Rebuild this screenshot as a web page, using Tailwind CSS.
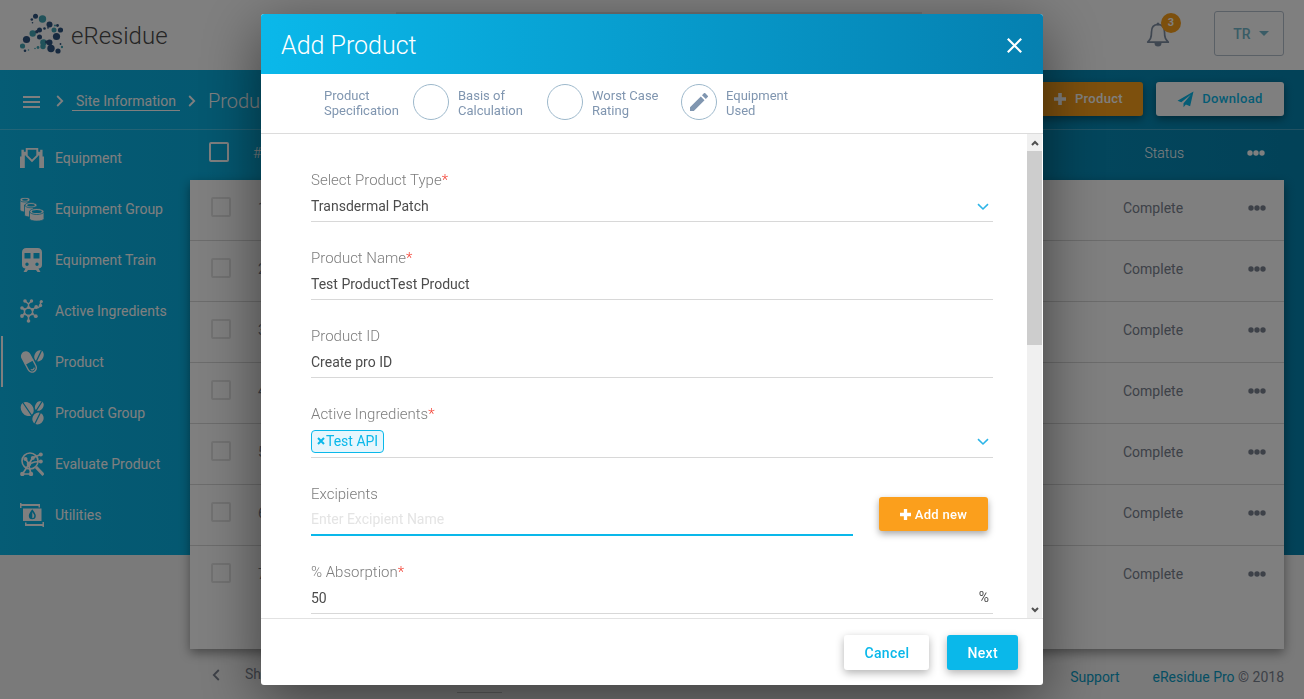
<!DOCTYPE html>
<html lang="en">
<head>
<meta charset="utf-8">
<meta name="viewport" content="width=device-width, initial-scale=1">
<title>eResidue - Add Product</title>
<script src="https://cdn.jsdelivr.net/npm/@tailwindcss/browser@4"></script>
</head>
<body class="h-screen overflow-hidden bg-[#f4f4f4] font-[Roboto,sans-serif] text-sm text-[#7b8390]">

<svg class="hidden" aria-hidden="true">
  <symbol id="dots" viewBox="0 0 18 6"><circle cx="3" cy="3" r="2.7"/><circle cx="9" cy="3" r="2.7"/><circle cx="15" cy="3" r="2.7"/></symbol>
  <symbol id="chev" viewBox="0 0 8 12"><path d="M1.2 1l5 5-5 5" fill="none" stroke="currentColor" stroke-width="1.8"/></symbol>
  <symbol id="down" viewBox="0 0 12 8"><path d="M1 1.2l5 4.8 5-4.800" fill="none" stroke="currentColor" stroke-width="1.6"/></symbol>
  <symbol id="plus" viewBox="0 0 12 12"><path d="M4.200 0h3.600v4.200H12v3.600H7.800V12H4.200V7.800H0V4.200h4.200z"/></symbol>
</svg>

<div class="flex min-h-screen flex-col">
  <header class="flex h-[70px] items-center bg-white px-5 pb-[3px]">
    <a href="#" class="flex items-center gap-2 text-[#4a4a4a]">
      <svg class="h-[42px] w-[43px]" viewBox="0 0 43 42" aria-hidden="true">
        <g fill="#42a5b5"><circle cx="22.500" cy="6" r="3.700"/><circle cx="12.700" cy="20.500" r="3.200"/><circle cx="34" cy="17" r="2.500"/><circle cx="2.500" cy="33" r="2.600"/><circle cx="23.500" cy="29.500" r="3.300"/><circle cx="23" cy="33.500" r="2.700"/><circle cx="42" cy="34" r="1.200"/><circle cx="18" cy="34.500" r="1.400"/><circle cx="15" cy="35.500" r=".8"/><circle cx="8.500" cy="37" r=".8"/><circle cx="35" cy="12.500" r="1"/></g>
        <g fill="#2f5580"><circle cx="15.500" cy="3.300" r="2.500"/><circle cx="11.800" cy="6.500" r="1.300"/><circle cx="12.500" cy="9.800" r=".8"/><circle cx="29.500" cy="11.500" r="3"/><circle cx="37.500" cy="12.500" r="1.400"/><circle cx="40.500" cy="17" r="2.600"/><circle cx="36.500" cy="23.500" r="3.600"/><circle cx="19.500" cy="17" r="2.500"/><circle cx="16.800" cy="18.800" r="1.700"/><circle cx="24.500" cy="15.500" r="1.300"/><circle cx="28" cy="14.800" r=".9"/><circle cx="19.500" cy="24" r="2.500"/><circle cx="6.500" cy="26.500" r="3.600"/><circle cx="29.500" cy="29.500" r="3"/><circle cx="31" cy="35.500" r="3.700"/><circle cx="26.500" cy="29" r="1.500"/><circle cx="38" cy="38" r="2.600"/><circle cx="5" cy="37.800" r="1.300"/><circle cx="40.500" cy="31" r=".9"/></g>
      </svg>
      <span class="pt-[5px] text-2xl font-light leading-8">eResidue</span>
    </a>
    <div class="ml-auto flex items-center gap-[33px]">
      <button type="button" aria-label="Notifications, 3 new" class="relative h-[45px] w-[35px]">
        <svg class="mt-[2px] h-[26px] w-6" viewBox="0 0 24 26" aria-hidden="true"><path d="M12 2.500c-4.500 0-6.500 3.200-6.500 7.500 0 6-1.300 7.500-3.800 10.200h20.600c-2.500-2.700-3.800-4.200-3.800-10.200 0-4.300-2-7.500-6.500-7.500z" fill="none" stroke="#7f8ea3" stroke-width="1.700" stroke-linejoin="round"/><path d="M8.500 21h7a3.500 3.500 0 0 1-7 0z" fill="#7f8ea3"/><circle cx="12" cy="2" r="1.500" fill="#7f8ea3"/></svg>
        <span class="absolute right-0 top-[2px] size-5 rounded-full bg-[#faa01b] text-center text-[11px] font-bold leading-5 text-white">3</span>
      </button>
      <button type="button" class="flex h-[45px] w-[70px] items-center justify-center gap-2 rounded-[3px] border border-[#b4c0cc] pl-1 font-medium text-[#74b9cc]">TR
        <svg class="h-[5px] w-[10px]" viewBox="0 0 10 5" fill="currentColor" aria-hidden="true"><path d="M0 0h10L5 5z"/></svg>
      </button>
    </div>
  </header>

  <main class="bg-[linear-gradient(90deg,#0ab8ea,#0584b0)] bg-[length:100%_485px] bg-no-repeat">
    <div class="flex h-[60px] items-center border-b border-white/25 px-5 pb-[1px] text-white">
      <button type="button" aria-label="Menu" class="ml-[3px] mr-4 flex w-[17px] flex-col gap-[3px] pt-[5px]">
        <span class="h-[2px] w-full bg-white"></span><span class="h-[2px] w-full bg-white"></span><span class="h-[2px] w-full bg-white"></span>
      </button>
      <svg class="mt-1 h-3 w-2"><use href="#chev"/></svg>
      <a href="#" class="ml-2 mt-1 border-b border-white px-1 leading-[18px]">Site Information</a>
      <svg class="ml-2 mt-1 h-3 w-2"><use href="#chev"/></svg>
      <h1 class="ml-3 mt-1 text-xl font-light">Products</h1>
      <button type="button" class="ml-auto flex h-[34px] items-center gap-[9px] rounded-[3px] bg-[#faa01b] px-5 text-[13px] font-medium tracking-wide shadow-[0_3px_8px_rgba(0,0,0,.4)]"><svg class="size-3" fill="currentColor"><use href="#plus"/></svg>Product</button>
      <button type="button" class="ml-[13px] flex h-[34px] w-32 items-center justify-center gap-2 rounded-[3px] bg-white text-[13px] font-medium tracking-wide text-[#0ab8ea] shadow-[0_3px_8px_rgba(0,0,0,.4)]">
        <svg class="size-[17px]" viewBox="0 0 17 17" fill="currentColor" aria-hidden="true"><path d="M16.500.5L.5 9.700l3.800 1.600L14 3.500 6.500 12.300v4l2.400-2.900 4.200 1.800z"/></svg>Download</button>
    </div>

    <div class="flex">
      <nav class="w-[190px] shrink-0 pt-[2px] text-white">
        <a href="#" class="flex h-[51px] items-center gap-[11px] pl-5"><svg class="size-6" viewBox="0 -2 25 25" aria-hidden="true"><path d="M0 21V9h1.500V2H4v2h3v4H5v13zM25 21V9h-1.500V2H21v2h-3v4h2v13z" fill="currentColor"/><path d="M7 1h11v7l-5.500 5.500L7 8z" fill="#0ab4e6" stroke="currentColor" stroke-width="2"/></svg>Equipment</a>
        <a href="#" class="flex h-[51px] items-center gap-[11px] pl-5"><svg class="size-6" viewBox="0 0 24 24" aria-hidden="true"><g fill="currentColor" stroke="#0ab4e6" stroke-width=".8"><path d="M0 2.500v10.500c0 1.500 4 2 5 2h3V2.500z"/><ellipse cx="5" cy="2.700" rx="5" ry="2.300"/><path d="M4.500 8v10c0 1.500 4 2 6 2h3V8z"/><ellipse cx="11" cy="8.200" rx="6" ry="2.600"/><path d="M9.500 14.500v7c0 3.500 14.500 3.500 14.500 0v-7z"/><ellipse cx="16.800" cy="14.500" rx="7.200" ry="3"/></g><g fill="#0ab4e6"><ellipse cx="5" cy="2.700" rx="3" ry="1"/><ellipse cx="11" cy="8.200" rx="3.800" ry="1.200"/><ellipse cx="16.800" cy="14.500" rx="5" ry="1.500"/></g></svg>Equipment Group</a>
        <a href="#" class="flex h-[51px] items-center gap-[11px] pl-5"><svg class="size-6" viewBox="0 0 24 24" aria-hidden="true"><path fill="currentColor" fill-rule="evenodd" d="M6.500 0h11c3 0 4.500 1.500 4.500 4.500V17c0 2-1.500 3.500-3.500 3.500l2 3.500h-3l-1.500-2H8l-1.500 2h-3l2-3.500C3.500 20.500 2 19 2 17V4.500C2 1.500 3.500 0 6.500 0zM4.500 5v5.500h6V5zm9 0v5.500h6V5zM7 14.500a1.700 1.700 0 1 0 0 3.400 1.700 1.700 0 0 0 0-3.400zm10 0a1.700 1.700 0 1 0 0 3.400 1.700 1.700 0 0 0 0-3.400z"/></svg>Equipment Train</a>
        <a href="#" class="flex h-[51px] items-center gap-[11px] pl-5"><svg class="size-6" viewBox="0 0 24 24" aria-hidden="true"><path d="M8.500 8.500l4 2v4.500l-4 2-4-2v-4.500zM8.500 8.500V5L5 2M8.500 5l3-3M4.500 10.500L2 9M4.500 15L2 17M8.500 17v5M12.500 15l3 2M12.500 10.500l3-2h3l2-2V3" fill="none" stroke="currentColor" stroke-width="1.500"/><g fill="currentColor"><circle cx="5" cy="2" r="1.800"/><circle cx="11.500" cy="2" r="1.700"/><circle cx="2" cy="9" r="1.800"/><circle cx="2" cy="17" r="1.900"/><circle cx="8.500" cy="22" r="1.800"/><circle cx="15.800" cy="17.200" r="1.900"/><circle cx="8.500" cy="8.500" r="1.600"/><circle cx="12.500" cy="10.500" r="1.500"/><circle cx="4.500" cy="10.500" r="1.300"/><circle cx="4.500" cy="15" r="1.300"/><circle cx="8.500" cy="17" r="1.400"/><circle cx="12.500" cy="15" r="1.300"/><circle cx="16.200" cy="8" r="1.900"/><circle cx="20.500" cy="6.500" r="1.700"/><circle cx="21.300" cy="2.500" r="1.600"/></g></svg>Active Ingredients</a>
        <a href="#" aria-current="page" class="relative flex h-[51px] items-center gap-[11px] pl-5 before:absolute before:left-px before:top-0 before:h-full before:w-[2px] before:bg-white"><svg class="size-6" viewBox="0 0 24 24" aria-hidden="true"><g transform="rotate(-28 9 12)"><path d="M4 12V5.500a5 5 0 0 1 10 0V12z" fill="currentColor"/><path d="M4.700 12v6.500a4.300 4.300 0 0 0 8.600 0V12z" fill="none" stroke="currentColor" stroke-width="1.400"/><path d="M7 19.500c1 1.500 3 1.500 4 0" fill="none" stroke="currentColor" stroke-width="1.200"/></g><ellipse cx="19" cy="5.800" rx="4.500" ry="5.800" fill="currentColor" transform="rotate(25 19 5.800)"/><path d="M21.500.5L16.500 11" stroke="#0ab4e6" stroke-width="1.300"/></svg>Product</a>
        <a href="#" class="flex h-[51px] items-center gap-[11px] pl-5"><svg class="size-6" viewBox="0 0 24 24" fill="currentColor" aria-hidden="true"><ellipse cx="7.200" cy="8" rx="6" ry="7.500" transform="rotate(-35 7.200 8)"/><ellipse cx="19.300" cy="5" rx="4" ry="5.200" transform="rotate(35 19.300 5)"/><ellipse cx="18" cy="17.500" rx="5.500" ry="6.200" transform="rotate(25 18 17.500)"/><g stroke="#0ab4e6" stroke-width="1.300"><path d="M2.500 1l9.500 14M22 .5L16 10M20.500 11.500l-6 12"/></g></svg>Product Group</a>
        <a href="#" class="flex h-[51px] items-center gap-[11px] pl-5"><svg class="size-6" viewBox="0 0 24 24" fill="none" stroke="currentColor" aria-hidden="true"><circle cx="10" cy="9" r="8" stroke-width="1.600"/><path d="M16 15l7.500 8" stroke-width="3"/><path d="M5.500 7l3.500 5 3.500-6 8-3.500M9 12l5.500-2 6-.5M9 12l-6.500 10M9 14l2 8M2 22h9" stroke-width="1.700"/><g fill="currentColor" stroke="none"><circle cx="5.500" cy="7" r="2"/><circle cx="9" cy="12" r="2.300"/><circle cx="12.800" cy="6" r="2"/><circle cx="20.800" cy="2.600" r="2"/><circle cx="20.800" cy="9.500" r="2"/><circle cx="2.300" cy="22" r="2.200"/><circle cx="11" cy="22" r="2.200"/></g></svg>Evaluate Product</a>
        <a href="#" class="flex h-[51px] items-center gap-[11px] pl-5"><svg class="size-6" viewBox="0 0 24 24" aria-hidden="true"><g fill="currentColor"><path d="M0 0h1.500v1H20v3.500h-1.500V3H1.500v2H0zM24 24h-1.500v-1H5v-3.500h1.500V21h16v-2H24zM3 5.500h18.500V18H3z"/></g><path d="M12.300 6.200c2.200 3 3.500 4.700 3.500 6.600a3.500 3.500 0 0 1-7 0c0-1.900 1.300-3.600 3.500-6.600z" fill="#0ab4e6"/><path d="M12.300 9v6.200a2.200 2.200 0 0 0 2-2.400c0-1-.8-2.200-2-3.800z" fill="currentColor"/></svg>Utilities</a>
      </nav>

      <section class="min-w-0 flex-1 pr-5">
        <table class="w-full table-fixed border-separate border-spacing-0 text-left">
          <thead class="text-white">
            <tr class="h-[50px]">
              <th class="w-[63px] pb-[6px] pl-[19px]"><input type="checkbox" aria-label="Select all" class="block size-5 appearance-none rounded-[2px] border-2 border-white"></th>
              <th class="pb-1 font-light">#</th>
              <th class="w-[144px] pb-1 text-right font-light"><span class="mr-[44px]">Status</span></th>
              <th class="w-[56px] pb-1"><button type="button" aria-label="Columns" class="ml-[19px] block"><svg class="h-[6px] w-[18px]" fill="currentColor"><use href="#dots"/></svg></button></th>
            </tr>
          </thead>
          <tbody id="rows" class="bg-white shadow-[0_4px_10px_rgba(0,0,0,.4)]"></tbody>
        </table>
        <footer class="flex h-[50px] items-center gap-[25px] pl-[22px]">
          <button type="button" aria-label="Previous page" class="flex items-center"><svg class="mt-[2px] h-3 w-2 rotate-180"><use href="#chev"/></svg></button>
          <label for="count">Show</label>
          <select id="count" class="ml-[152px] h-[44px] w-[45px] appearance-none self-start border-b border-[#c0c0c0]"><option>10</option></select>
          <p class="ml-auto mt-[6px] flex gap-[33px]"><a href="#" class="text-[#0a9ec8]">Support</a><span><a href="#" class="text-[#0a9ec8]">eResidue Pro</a> © 2018</span></p>
        </footer>
      </section>
    </div>
  </main>
</div>

<div class="fixed inset-0 flex justify-center bg-black/50 py-[14px]">
  <div class="absolute left-[396px] top-3 h-1 w-[526px] bg-black/10" aria-hidden="true"></div>
  <div role="dialog" aria-modal="true" aria-labelledby="dialog-title" class="relative flex w-full max-w-[782px] flex-col overflow-hidden rounded-[3px] bg-white shadow-[0_15px_60px_rgba(0,0,0,.5)]">
    <div class="flex h-[60px] shrink-0 items-center justify-between bg-[linear-gradient(90deg,#0ab8ea,#0580b0)] px-5 text-white">
      <h2 id="dialog-title" class="pt-1 text-[25px] font-light">Add Product</h2>
      <button type="button" aria-label="Close" class="flex size-[18px] items-center justify-center pt-[2px]"><svg class="size-[15px]" viewBox="0 0 15 15" stroke="currentColor" stroke-width="2.200" aria-hidden="true"><path d="M.8.8l13.400 13.400M14.200.8L.8 14.200"/></svg></button>
    </div>
    <ol class="flex h-[60px] shrink-0 border-b border-[#dcdcdc] pl-[18px] pt-[10px] text-[13px] leading-[15px] text-[#8096b0]">
      <li class="flex h-9 w-[134px] items-center gap-[9px]"><span class="size-9 shrink-0"></span><span class="pt-[2px]">Product<br>Specification</span></li>
      <li class="flex h-9 w-[134px] items-center gap-[9px]"><span class="size-9 shrink-0 rounded-full border border-[#9db8cb]"></span><span class="pt-[2px]">Basis of<br>Calculation</span></li>
      <li class="flex h-9 w-[134px] items-center gap-[9px]"><span class="size-9 shrink-0 rounded-full border border-[#9db8cb]"></span><span class="pt-[2px]">Worst Case<br>Rating</span></li>
      <li class="flex h-9 w-[134px] items-center gap-[9px]"><span class="flex size-9 shrink-0 items-center justify-center rounded-full border border-[#9db8cb]"><svg class="size-[18px]" viewBox="0 0 18 18" fill="currentColor" aria-hidden="true"><path d="M0 14.200V18h3.800L14.500 7.200l-3.700-3.700zM17.700 4.100a1 1 0 0 0 0-1.400L15.300.3a1 1 0 0 0-1.400 0L12 2.200l3.800 3.800z"/></svg></span><span class="pt-[2px]">Equipment<br>Used</span></li>
    </ol>

    <div class="flex min-h-0 flex-1">
      <form id="product" class="min-w-0 flex-1 overflow-hidden pb-4 pl-[50px] pr-[34px] pt-[10px] text-[#4c4c4c]">
        <div class="pt-6">
          <label for="type" class="block h-6 text-[15px] font-light leading-6 text-[#7d7d7d]">Select Product Type<span class="text-[#f44336]">*</span></label>
          <div class="flex items-center border-b border-[#d8d8d8] pr-1">
            <select id="type" class="h-[29px] flex-1 appearance-none pb-[2px]"><option>Transdermal Patch</option></select>
            <svg class="h-2 w-3 text-[#2db5e8]"><use href="#down"/></svg>
          </div>
        </div>
        <div class="pt-6">
          <label for="name" class="block h-6 text-[15px] font-light leading-6 text-[#7d7d7d]">Product Name<span class="text-[#f44336]">*</span></label>
          <input id="name" type="text" value="Test ProductTest Product" class="block h-[30px] w-full border-b border-[#d8d8d8] pb-[2px]">
        </div>
        <div class="pt-6">
          <label for="pid" class="block h-6 text-[15px] font-light leading-6 text-[#7d7d7d]">Product ID</label>
          <input id="pid" type="text" value="Create pro ID" class="block h-[30px] w-full border-b border-[#d8d8d8] pb-[2px]">
        </div>
        <div class="pt-6">
          <span class="block h-6 text-[15px] font-light leading-6 text-[#7d7d7d]">Active Ingredients<span class="text-[#f44336]">*</span></span>
          <div class="flex h-8 items-center justify-between border-b border-[#d8d8d8] pr-1">
            <span class="flex h-[23px] items-center rounded-[4px] border border-[#0ab8ea] bg-[#e6f6fd] px-[5px] pb-[2px] text-[#0ab8ea]"><button type="button" aria-label="Remove Test API" class="mr-px flex items-center"><svg class="size-2" viewBox="0 0 8 8" stroke="currentColor" stroke-width="2" aria-hidden="true"><path d="M1 1l6 6M7 1L1 7"/></svg></button>Test API</span>
            <button type="button" aria-label="Open ingredients"><svg class="h-2 w-3 text-[#2db5e8]"><use href="#down"/></svg></button>
          </div>
        </div>
        <div class="flex items-end gap-[26px] pr-[5px]">
          <div class="flex-1 pt-6">
            <label for="exc" class="block h-6 text-[15px] font-light leading-6 text-[#7d7d7d]">Excipients</label>
            <input id="exc" type="text" placeholder="Enter Excipient Name" class="block h-[30px] w-full border-b-2 border-[#0ab8ea] pb-[2px] placeholder:text-[#e4e4e4]">
          </div>
          <button type="button" class="mb-[5px] flex h-[34px] w-[109px] items-center justify-center gap-1 rounded-[3px] bg-[#fb9f1c] text-[13px] font-medium tracking-wide text-white shadow-[0_3px_7px_rgba(0,0,0,.35)]"><svg class="size-[11px]" viewBox="0 0 12 12" fill="currentColor"><use href="#plus"/></svg><span class="pt-[3px]">Add new</span></button>
        </div>
        <div class="pt-6">
          <label for="abs" class="block h-6 text-[15px] font-light leading-6 text-[#7d7d7d]">% Absorption<span class="text-[#f44336]">*</span></label>
          <div class="flex items-center border-b border-[#d8d8d8] pr-1"><input id="abs" type="text" value="50" class="h-[29px] min-w-0 flex-1 pb-[2px]"><span class="pb-[3px]">%</span></div>
        </div>
      </form>
      <div class="mr-px flex w-[15px] flex-col bg-[#f0f0f0] text-[#505050]" aria-hidden="true">
        <span class="flex h-[17px] items-center justify-center"><svg class="h-[6px] w-2 rotate-180" viewBox="0 0 8 6" fill="none" stroke="currentColor" stroke-width="2"><path d="M1 1l3 3 3-3"/></svg></span>
        <span class="h-[194px] bg-[#cdcdcd]"></span>
        <span class="mt-auto flex h-[17px] items-center justify-center"><svg class="h-[6px] w-2" viewBox="0 0 8 6" fill="none" stroke="currentColor" stroke-width="2"><path d="M1 1l3 3 3-3"/></svg></span>
      </div>
    </div>

    <div class="flex h-[67px] shrink-0 items-center justify-end gap-[18px] border-t border-[#e2e2e2] pr-[25px]">
      <button type="button" class="h-[35px] rounded-[3px] bg-white px-5 pt-px text-sm font-medium tracking-wide text-[#0ab8ea] shadow-[0_3px_8px_rgba(0,0,0,.3)]">Cancel</button>
      <button type="submit" form="product" class="h-[35px] rounded-[3px] bg-[#0ab8ea] px-5 pt-px text-sm font-medium tracking-wide text-white shadow-[0_3px_8px_rgba(0,0,0,.3)]">Next</button>
    </div>
  </div>
</div>

<script>
  const rows = document.getElementById('rows');
  for (let n = 1; n <= 7; n++) {
    const last = n === 7;
    const line = last ? '' : 'border-b border-[#d8d8d8]';
    const box = last ? 'pb-[50px]' : 'pb-[6px]';
    const cell = last ? 'pb-[48px]' : 'pb-1';
    rows.insertAdjacentHTML('beforeend', `
      <tr class="${last ? 'h-[103px]' : 'h-[61px]'}">
        <td class="${line} ${box} pl-[21px]"><input type="checkbox" aria-label="Select row ${n}" class="block size-5 appearance-none rounded-[2px] border-2 border-[#e4e4e4]"></td>
        <td class="${line} ${cell} pl-[5px]">${n}</td>
        <td class="${line} ${cell}"><span class="ml-[39px]">Complete</span></td>
        <td class="${line} ${cell}"><button type="button" aria-label="Row ${n} actions" class="ml-[20px] block"><svg class="h-[6px] w-[18px]" fill="currentColor"><use href="#dots"/></svg></button></td>
      </tr>`);
  }
</script>
</body>
</html>
